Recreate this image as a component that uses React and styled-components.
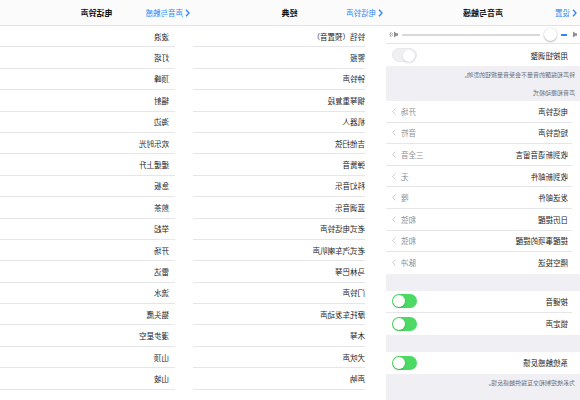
import styled, { createGlobalStyle } from "styled-components";

const GlobalStyle = createGlobalStyle`
  html, body {
    margin: 0;
    padding: 0;
    background: #ffffff;
  }
`;

// the reference is a mirror image of the three iOS screens
const Screen = styled.div`
  width: 580px;
  height: 400px;
  display: flex;
  overflow: hidden;
  transform: scaleX(-1);
  background: #ffffff;
  font-family: "Noto Sans CJK SC", "Noto Sans", sans-serif;
  color: #1c1c1e;
`;

const Panel = styled.div`
  flex: 0 0 ${(p) => p.$w}px;
  display: flex;
  flex-direction: column;
  background: ${(p) => p.$bg || "#ffffff"};
  overflow: hidden;
`;

const NavBar = styled.div`
  flex: 0 0 26px;
  display: grid;
  grid-template-columns: 1fr auto 1fr;
  align-items: center;
  background: #fbfbfb;
  border-bottom: 1px solid #e2e2e6;
  box-sizing: border-box;
`;

const Back = styled.div`
  display: flex;
  align-items: center;
  gap: 2px;
  padding-left: 3px;
  color: #2f86f6;
  font-size: 7.5px;
`;

const Title = styled.div`
  font-size: 8px;
  font-weight: 700;
  color: #111;
`;

const Row = styled.div`
  flex: 0 0 auto;
  padding-left: ${(p) => p.$inset}px;
  background: #ffffff;
`;

const RowBody = styled.div`
  height: ${(p) => p.$h || 21.5}px;
  box-sizing: border-box;
  display: flex;
  align-items: center;
  padding-left: ${(p) => p.$pad || 0}px;
  padding-right: 6px;
  border-bottom: ${(p) => (p.$last ? "none" : "1px solid #e6e6ea")};
  font-size: 7.5px;
`;

const Label = styled.span`
  flex: 1;
  white-space: nowrap;
`;

const Value = styled.span`
  color: #8e8e93;
  margin-right: 5px;
`;

const Chevron = styled.svg`
  width: 4px;
  height: 7px;
  flex: 0 0 auto;
`;

const SliderRow = styled.div`
  flex: 0 0 17px;
  display: flex;
  align-items: center;
  gap: 4px;
  padding: 0 2px 0 3px;
  background: #ffffff;
  border-bottom: 1px solid #e6e6ea;
`;

const Track = styled.div`
  flex: 1;
  height: 2px;
  background: #d8d8dc;
  display: flex;
  align-items: center;
`;

const Filled = styled.div`
  height: 2px;
  background: #2f86f6;
`;

const Thumb = styled.div`
  width: 13px;
  height: 13px;
  border-radius: 50%;
  background: #ffffff;
  box-shadow: 0 1px 2px rgba(0, 0, 0, 0.25), 0 0 0 0.5px rgba(0, 0, 0, 0.08);
`;

const Toggle = styled.div`
  width: 25px;
  height: 14px;
  border-radius: 7px;
  box-sizing: border-box;
  padding: 1px;
  display: flex;
  justify-content: ${(p) => (p.$on ? "flex-end" : "flex-start")};
  background: ${(p) => (p.$on ? "#4cd964" : "#ececef")};
  border: ${(p) => (p.$on ? "none" : "1px solid #e2e2e5")};
  opacity: ${(p) => (p.$dim ? 0.75 : 1)};
`;

const Knob = styled.div`
  width: 12px;
  height: 12px;
  border-radius: 50%;
  background: #ffffff;
  box-shadow: 0 1px 2px rgba(0, 0, 0, 0.2);
`;

const GrayBlock = styled.div`
  flex: 0 0 ${(p) => p.$h}px;
  background: #efeff4;
  display: flex;
  flex-direction: column;
  padding: 0 5px;
  box-sizing: border-box;
`;

const Note = styled.div`
  font-size: 6px;
  color: #6d6d72;
  margin-top: ${(p) => p.$top}px;
  white-space: nowrap;
`;

const Fill = styled.div`
  flex: 1;
  background: ${(p) => p.$bg};
`;

const BackChevron = () => (
  <svg width="5" height="8" viewBox="0 0 5 8">
    <polyline points="4,0.8 1,4 4,7.2" fill="none" stroke="#2f86f6" strokeWidth="1.3" />
  </svg>
);

const RowChevron = () => (
  <Chevron viewBox="0 0 4 7">
    <polyline points="0.7,0.7 3.3,3.5 0.7,6.3" fill="none" stroke="#c4c4c9" strokeWidth="0.9" />
  </Chevron>
);

const SpeakerLow = () => (
  <svg width="6" height="7" viewBox="0 0 6 7">
    <path d="M0 2.3h1.6L4 0.5v6L1.6 4.7H0z" fill="#8e8e93" />
  </svg>
);

const SpeakerHigh = () => (
  <svg width="10" height="7" viewBox="0 0 10 7">
    <path d="M0 2.3h1.6L4 0.5v6L1.6 4.7H0z" fill="#8e8e93" />
    <path d="M5.4 2.2a1.8 1.8 0 0 1 0 2.6M6.8 1a3.5 3.5 0 0 1 0 5" fill="none" stroke="#8e8e93" strokeWidth="0.8" />
  </svg>
);

const alerts = [
  ["电话铃声", "开场"],
  ["短信铃声", "音符"],
  ["收到新语音留言", "三全音"],
  ["收到新邮件", "无"],
  ["发送邮件", "嗖"],
  ["日历提醒", "和弦"],
  ["提醒事项的提醒", "和弦"],
  ["隔空投送", "脉冲"],
];

const classic = [
  "铃铛（预置音）",
  "警报",
  "钟铃声",
  "钢琴重复段",
  "机器人",
  "吉他扫弦",
  "弹簧音",
  "科幻音乐",
  "蓝调音乐",
  "老式电话铃声",
  "老式汽车喇叭声",
  "马林巴琴",
  "门铃声",
  "摩托车发动声",
  "木琴",
  "犬吠声",
  "声呐",
];

const ringtones = [
  "波浪",
  "灯塔",
  "顶峰",
  "辐射",
  "海边",
  "欢乐时光",
  "缓缓上升",
  "急板",
  "煎茶",
  "举起",
  "开场",
  "雷达",
  "流水",
  "猫头鹰",
  "漫步星空",
  "山顶",
  "山坡",
];

const SoundsPanel = () => (
  <Panel $w={194} $bg="#efeff4">
    <NavBar>
      <Back>
        <BackChevron />
        设置
      </Back>
      <Title>声音与触感</Title>
      <span />
    </NavBar>
    <SliderRow>
      <SpeakerLow />
      <Filled style={{ width: 6 }} />
      <Thumb />
      <Track />
      <SpeakerHigh />
    </SliderRow>
    <Row $inset={0}>
      <RowBody $pad={12} $h={22} $last>
        <Label>用按钮调整</Label>
        <Toggle $dim>
          <Knob />
        </Toggle>
      </RowBody>
    </Row>
    <GrayBlock $h={35}>
      <Note $top={4}>铃声和提醒的音量不会受音量按钮的影响。</Note>
      <Note $top={9}>声音和振动模式</Note>
    </GrayBlock>
    {alerts.map(([name, val], i) => (
      <Row key={name} $inset={8}>
        <RowBody $pad={4} $h={21.6} $last={i === alerts.length - 1}>
          <Label>{name}</Label>
          <Value>{val}</Value>
          <RowChevron />
        </RowBody>
      </Row>
    ))}
    <GrayBlock $h={17} />
    <Row $inset={8}>
      <RowBody $pad={4} $h={22}>
        <Label>按键音</Label>
        <Toggle $on>
          <Knob />
        </Toggle>
      </RowBody>
    </Row>
    <Row $inset={8}>
      <RowBody $pad={4} $h={22} $last>
        <Label>锁定声</Label>
        <Toggle $on>
          <Knob />
        </Toggle>
      </RowBody>
    </Row>
    <GrayBlock $h={17} />
    <Row $inset={0}>
      <RowBody $pad={12} $h={22} $last>
        <Label>系统触感反馈</Label>
        <Toggle $on>
          <Knob />
        </Toggle>
      </RowBody>
    </Row>
    <GrayBlock $h={20}>
      <Note $top={4}>为系统控制和交互提供触感反馈。</Note>
    </GrayBlock>
    <Fill $bg="#efeff4" />
  </Panel>
);

const ListPanel = ({ w, back, title, items, inset, pad }) => (
  <Panel $w={w}>
    <NavBar>
      <Back>
        <BackChevron />
        {back}
      </Back>
      <Title>{title}</Title>
      <span />
    </NavBar>
    {items.map((name) => (
      <Row key={name} $inset={inset}>
        <RowBody $pad={pad} $h={21.4}>
          <Label>{name}</Label>
        </RowBody>
      </Row>
    ))}
    <Fill $bg="#ffffff" />
  </Panel>
);

export default function App() {
  return (
    <>
      <GlobalStyle />
      <Screen>
        <SoundsPanel />
        <ListPanel w={193} back="电话铃声" title="经典" items={classic} inset={21} pad={0} />
        <ListPanel w={193} back="声音与触感" title="电话铃声" items={ringtones} inset={18} pad={6} />
      </Screen>
    </>
  );
}
